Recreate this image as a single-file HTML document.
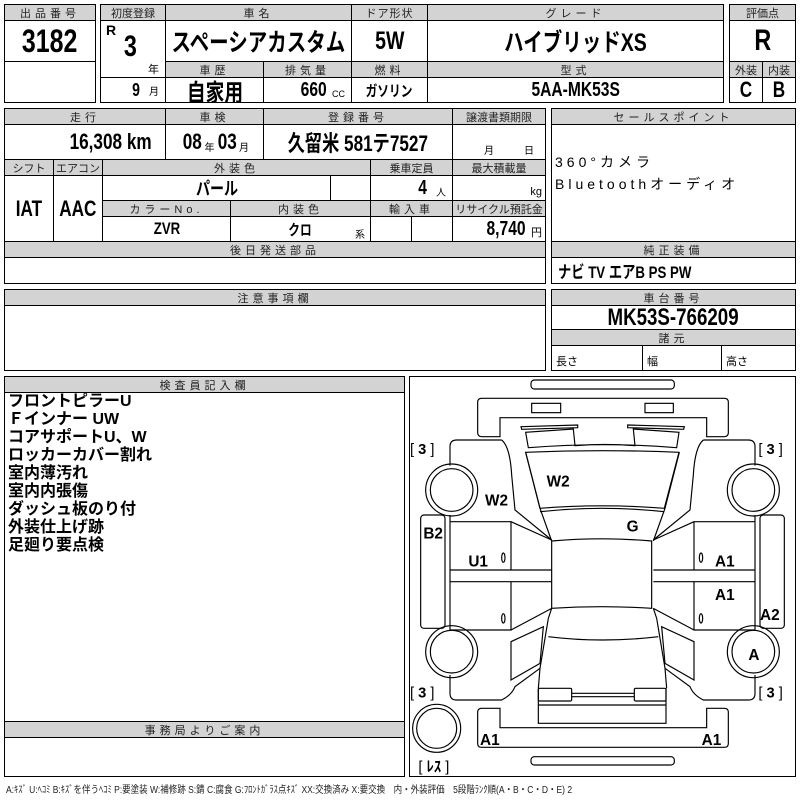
<!DOCTYPE html>
<html><head><meta charset="utf-8"><style>
*{margin:0;padding:0;box-sizing:border-box}
body{width:800px;height:800px;background:#fff;position:relative;overflow:hidden;font-family:"Liberation Sans","Noto Sans CJK JP",sans-serif;color:#000}
.c{position:absolute;border:1.5px solid #000;display:flex;align-items:center;justify-content:center;white-space:nowrap;overflow:hidden}
.h{background:#d3d3d3;font-size:11px;letter-spacing:4px;color:#222}
.v{font-weight:bold;font-size:22px}
.n{display:inline-block;transform:scaleX(.78);font-weight:bold}
.t{position:absolute;white-space:nowrap}
</style></head><body>
<div class="c h" style="left:4px;top:4px;width:92px;height:17px">出品番号</div>
<div class="c" style="left:4px;top:20px;width:92px;height:42px"><span class="n" style="font-size:32px">3182</span></div>
<div class="c" style="left:4px;top:61px;width:92px;height:42px"></div>
<div class="c h" style="left:100px;top:4px;width:66px;height:17px;letter-spacing:0">初度登録</div>
<div class="c h" style="left:165px;top:4px;width:187px;height:17px">車名</div>
<div class="c h" style="left:351px;top:4px;width:77px;height:17px;letter-spacing:1px">ドア形状</div>
<div class="c h" style="left:427px;top:4px;width:297px;height:17px">グレード</div>
<div class="c" style="left:100px;top:20px;width:66px;height:58px"></div>
<div class="t" style="left:106px;top:22px;font-size:14px;font-weight:bold">R</div>
<div class="t" style="left:122px;top:30px"><span class="n" style="font-size:30px">3</span></div>
<div class="t" style="left:148px;top:61px;font-size:11px">年</div>
<div class="c" style="left:100px;top:77px;width:66px;height:26px;justify-content:flex-end;padding-right:6px"><span class="n" style="font-size:18px">9</span><span style="font-size:10px;margin-left:8px">月</span></div>
<div class="c" style="left:165px;top:20px;width:187px;height:42px"><span class="n" style="font-size:25px">スペーシアカスタム</span></div>
<div class="c" style="left:351px;top:20px;width:77px;height:42px"><span class="n" style="font-size:25px">5W</span></div>
<div class="c" style="left:427px;top:20px;width:297px;height:42px"><span class="n" style="font-size:25px">ハイブリッドXS</span></div>
<div class="c h" style="left:165px;top:61px;width:99px;height:17px">車歴</div>
<div class="c h" style="left:263px;top:61px;width:89px;height:17px">排気量</div>
<div class="c h" style="left:351px;top:61px;width:77px;height:17px">燃料</div>
<div class="c h" style="left:427px;top:61px;width:297px;height:17px">型式</div>
<div class="c" style="left:165px;top:77px;width:99px;height:26px"><span class="n" style="font-size:24px">自家用</span></div>
<div class="c" style="left:263px;top:77px;width:89px;height:26px;justify-content:flex-end;padding-right:6px"><span class="n" style="font-size:20px">660</span><span style="font-size:9px;margin-left:2px;margin-top:8px">CC</span></div>
<div class="c" style="left:351px;top:77px;width:77px;height:26px"><span class="n" style="font-size:15px">ガソリン</span></div>
<div class="c" style="left:427px;top:77px;width:297px;height:26px"><span class="n" style="font-size:20px">5AA-MK53S</span></div>
<div class="c h" style="left:729px;top:4px;width:67px;height:17px;letter-spacing:0">評価点</div>
<div class="c" style="left:729px;top:20px;width:67px;height:42px"><span class="n" style="font-size:30px">R</span></div>
<div class="c h" style="left:729px;top:61px;width:34px;height:17px;letter-spacing:0">外装</div>
<div class="c h" style="left:762px;top:61px;width:34px;height:17px;letter-spacing:0">内装</div>
<div class="c" style="left:729px;top:77px;width:34px;height:26px"><span class="n" style="font-size:22px">C</span></div>
<div class="c" style="left:762px;top:77px;width:34px;height:26px"><span class="n" style="font-size:22px">B</span></div>
<div class="c h" style="left:4px;top:108px;width:162px;height:17px">走行</div>
<div class="c h" style="left:165px;top:108px;width:99px;height:17px">車検</div>
<div class="c h" style="left:263px;top:108px;width:190px;height:17px">登録番号</div>
<div class="c h" style="left:452px;top:108px;width:94px;height:17px;letter-spacing:0">譲渡書類期限</div>
<div class="c" style="left:4px;top:124px;width:162px;height:36px;justify-content:flex-end;padding-right:2px"><span class="n" style="font-size:22px">16,308 km</span></div>
<div class="c" style="left:165px;top:124px;width:99px;height:36px"><span class="n" style="font-size:22px">08</span><span style="font-size:10px;margin-top:8px">年</span><span class="n" style="font-size:22px">03</span><span style="font-size:10px;margin-top:8px">月</span></div>
<div class="c" style="left:263px;top:124px;width:190px;height:36px"><span class="n" style="font-size:22px">久留米 581テ7527</span></div>
<div class="c" style="left:452px;top:124px;width:94px;height:36px;font-size:10px;padding-top:14px">　　月　　　日</div>
<div class="c h" style="left:4px;top:159px;width:50px;height:17px;letter-spacing:0">シフト</div>
<div class="c h" style="left:53px;top:159px;width:50px;height:17px;letter-spacing:0">エアコン</div>
<div class="c h" style="left:102px;top:159px;width:269px;height:17px">外装色</div>
<div class="c h" style="left:370px;top:159px;width:83px;height:17px;letter-spacing:0">乗車定員</div>
<div class="c h" style="left:452px;top:159px;width:94px;height:17px;letter-spacing:0">最大積載量</div>
<div class="c" style="left:4px;top:175px;width:50px;height:67px"><span class="n" style="font-size:22px">IAT</span></div>
<div class="c" style="left:53px;top:175px;width:50px;height:67px"><span class="n" style="font-size:22px">AAC</span></div>
<div class="c" style="left:102px;top:175px;width:229px;height:26px"><span class="n" style="font-size:18px">パール</span></div>
<div class="c" style="left:330px;top:175px;width:41px;height:26px"></div>
<div class="c" style="left:370px;top:175px;width:83px;height:26px;justify-content:flex-end;padding-right:6px"><span class="n" style="font-size:20px">4</span><span style="font-size:10px;margin-left:8px;margin-top:6px">人</span></div>
<div class="c" style="left:452px;top:175px;width:94px;height:26px;justify-content:flex-end;padding-right:3px;font-size:11px;padding-top:8px">kg</div>
<div class="c h" style="left:102px;top:200px;width:129px;height:17px">カラーNo.</div>
<div class="c h" style="left:230px;top:200px;width:141px;height:17px">内装色</div>
<div class="c h" style="left:370px;top:200px;width:83px;height:17px">輸入車</div>
<div class="c h" style="left:452px;top:200px;width:94px;height:17px;letter-spacing:0">リサイクル預託金</div>
<div class="c" style="left:102px;top:216px;width:129px;height:26px"><span class="n" style="font-size:17px">ZVR</span></div>
<div class="c" style="left:230px;top:216px;width:141px;height:26px"><span class="n" style="font-size:15px">クロ</span></div>
<div class="t" style="left:355px;top:226px;font-size:10px">系</div>
<div class="c" style="left:370px;top:216px;width:42px;height:26px"></div>
<div class="c" style="left:411px;top:216px;width:42px;height:26px"></div>
<div class="c" style="left:452px;top:216px;width:94px;height:26px;justify-content:flex-end;padding-right:3px"><span class="n" style="font-size:20px">8,740</span><span style="font-size:11px;margin-top:5px">円</span></div>
<div class="c h" style="left:4px;top:241px;width:542px;height:17px">後日発送部品</div>
<div class="c" style="left:4px;top:257px;width:542px;height:27px"></div>
<div class="c h" style="left:551px;top:108px;width:245px;height:17px">セールスポイント</div>
<div class="c" style="left:551px;top:124px;width:245px;height:118px"></div>
<div class="t" style="left:555px;top:151px;font-size:14px;letter-spacing:4px;line-height:22px">360°カメラ<br>Bluetoothオーディオ</div>
<div class="c h" style="left:551px;top:241px;width:245px;height:17px">純正装備</div>
<div class="c" style="left:551px;top:257px;width:245px;height:27px;justify-content:flex-start;padding-left:6px"><span class="n" style="font-size:17px;transform-origin:left">ナビ  TV  エアB  PS  PW</span></div>
<div class="c h" style="left:4px;top:289px;width:542px;height:17px">注意事項欄</div>
<div class="c" style="left:4px;top:305px;width:542px;height:66px"></div>
<div class="c h" style="left:551px;top:289px;width:245px;height:17px">車台番号</div>
<div class="c" style="left:551px;top:305px;width:245px;height:25px"><span class="n" style="font-size:24px">MK53S-766209</span></div>
<div class="c h" style="left:551px;top:329px;width:245px;height:17px">諸元</div>
<div class="c" style="left:551px;top:345px;width:92px;height:26px;justify-content:flex-start;padding-left:4px;font-size:11px;padding-top:6px">長さ</div>
<div class="c" style="left:642px;top:345px;width:80px;height:26px;justify-content:flex-start;padding-left:4px;font-size:11px;padding-top:6px">幅</div>
<div class="c" style="left:721px;top:345px;width:75px;height:26px;justify-content:flex-start;padding-left:4px;font-size:11px;padding-top:6px">高さ</div>
<div class="c h" style="left:4px;top:376px;width:401px;height:17px">検査員記入欄</div>
<div class="c" style="left:4px;top:392px;width:401px;height:330px"></div>
<div class="t" style="left:8px;top:393px;font-size:16px;font-weight:bold;line-height:18px">フロントピラーU<br>Ｆインナー UW<br>コアサポートU、W<br>ロッカーカバー割れ<br>室内薄汚れ<br>室内内張傷<br>ダッシュ板のり付<br>外装仕上げ跡<br>足廻り要点検</div>
<div class="c h" style="left:4px;top:721px;width:401px;height:17px">事務局よりご案内</div>
<div class="c" style="left:4px;top:737px;width:401px;height:40px"></div>
<div class="c" style="left:409px;top:376px;width:387px;height:401px"></div>
<svg style="position:absolute;left:405px;top:375px" width="395" height="400" viewBox="0 0 1185 1200">
<defs><g id="half" fill="none" stroke="#000" stroke-width="3.5">
<path d="M290,195 L155,195 Q135,195 135,215 L135,272 M135,420 L135,440"/>
<path d="M290,195 Q315,215 320,300 L330,405 L440,495"/>
<circle cx="140" cy="345" r="78"/><circle cx="140" cy="345" r="64"/>
<circle cx="140" cy="830" r="78"/><circle cx="140" cy="830" r="64"/>
<rect x="47" y="420" width="73" height="340" rx="10"/>
<path d="M135,440 L318,440 L318,585 M135,440 L135,765 L318,765 L318,620 M135,585 L440,585 M135,620 L440,620 M318,440 L440,495 M318,765 L440,700"/>
<path d="M318,915 L318,800 L415,755 L405,865 Z"/>
<path d="M135,900 L135,955 Q135,975 155,975 L290,975 Q320,960 330,935 L405,880"/>
<path d="M440,700 L430,730 L405,880 L400,940"/>
<path d="M362,232 L405,400 L440,498"/>
</g></defs>
<use href="#half"/>
<use href="#half" transform="translate(1185,0) scale(-1,1)"/>
<g fill="none" stroke="#000" stroke-width="3.5">
<rect x="378" y="15" width="430" height="27" rx="10"/>
<path d="M285,185 L230,185 Q218,185 218,173 L218,82 Q218,70 230,70 L958,70 Q970,70 970,82 L970,173 Q970,185 958,185 L905,185 L905,128 L285,128 Z"/>
<rect x="380" y="85" width="87" height="28"/><rect x="720" y="85" width="85" height="28"/>
<path d="M348,155 L518,150 L518,158 L350,163 Z M668,150 L838,155 L836,163 L668,158 Z"/>
<path d="M370,218 L362,172 L505,162 L510,212 Q600,205 690,212 L685,162 L822,172 L815,218 Q600,200 370,218 Z"/>
<path d="M362,232 Q590,222 822,232 L778,400 Q590,385 405,400 Z"/>
<path d="M405,410 Q590,390 778,410"/>
<path d="M440,498 Q590,485 740,498 L740,700 Q590,690 440,700 Z"/>
<path d="M430,785 Q590,805 760,785"/>
<path d="M400,940 L400,1045 L783,1045 L783,940"/>
<rect x="400" y="940" width="100" height="38" rx="4"/><rect x="688" y="940" width="95" height="38" rx="4"/>
<path d="M500,955 L688,955 M500,965 L688,965 M400,990 L783,990"/>
<path d="M285,1000 L285,1058 L905,1058 L905,1000 L958,1000 Q970,1000 970,1012 L970,1105 Q970,1117 958,1117 L230,1117 Q218,1117 218,1105 L218,1012 Q218,1000 230,1000 Z"/>
<rect x="378" y="1145" width="430" height="25" rx="10"/>
<circle cx="95" cy="1060" r="72"/><circle cx="95" cy="1060" r="60"/>
<ellipse cx="295" cy="548" rx="5" ry="14"/><ellipse cx="295" cy="730" rx="5" ry="14"/>
<ellipse cx="888" cy="548" rx="5" ry="14"/><ellipse cx="888" cy="730" rx="5" ry="14"/>
</g>
<g font-family="Liberation Sans,Noto Sans CJK JP,sans-serif" font-size="46" font-weight="bold">
<text x="425" y="335">W2</text><text x="240" y="392">W2</text><text x="665" y="470">G</text>
<text x="55" y="490">B2</text><text x="190" y="575">U1</text><text x="930" y="575">A1</text>
<text x="930" y="675">A1</text><text x="1065" y="735">A2</text><text x="1030" y="855">A</text>
<text x="225" y="1110">A1</text><text x="890" y="1110">A1</text>
</g>
<g font-family="Liberation Sans,Noto Sans CJK JP,sans-serif" font-size="44">
<text x="15" y="237">[ <tspan font-weight="bold">3</tspan> ]</text>
<text x="1060" y="237">[ <tspan font-weight="bold">3</tspan> ]</text>
<text x="15" y="967">[ <tspan font-weight="bold">3</tspan> ]</text>
<text x="1060" y="967">[ <tspan font-weight="bold">3</tspan> ]</text>
<text x="40" y="1190">[ <tspan font-weight="bold">ﾚｽ</tspan> ]</text>
</g>
</svg>
<div class="t" style="left:6px;top:781px;font-size:10px;transform:scaleX(.85);transform-origin:left;color:#222">A:ｷｽﾞ U:ﾍｺﾐ B:ｷｽﾞを伴うﾍｺﾐ P:要塗装 W:補修跡 S:錆 C:腐食 G:ﾌﾛﾝﾄｶﾞﾗｽ点ｷｽﾞ XX:交換済み X:要交換　内・外装評価　5段階ﾗﾝｸ順(A・B・C・D・E) 2</div>
</body></html>
